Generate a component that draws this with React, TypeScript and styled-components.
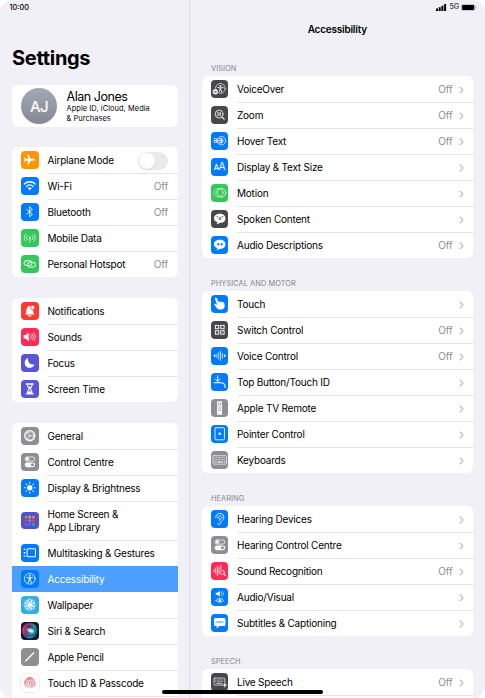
import React from 'react';
import styled, { createGlobalStyle, css } from 'styled-components';

const palette = {
  background: '#f1f0f6',
  line: '#e4e4e8',
  gray: '#8e8e93',
  dark: '#48484a',
  blue: '#007aff',
  green: '#34c759',
  orange: '#ff9500',
  red: '#ff3b30',
  pink: '#ff2d55',
  indigo: '#5856d6',
  cyan: '#32ade6',
};

type IconName = keyof typeof glyphs;

interface Item {
  label: string;
  icon: IconName;
  color: string;
  value?: string;
  toggle?: boolean;
  active?: boolean;
  tall?: boolean;
}

const glyphs = {
  airplane: (
    <path
      fill="#fff"
      stroke="none"
      d="M42 26c0 2-3 3-6 3h-7l-7 12h-4l4-12h-7l-3 4H9l2-7-2-7h3l3 4h7l-4-12h4l7 12h7c3 0 6 1 6 3z"
    />
  ),
  wifi: (
    <>
      <path strokeWidth="4" d="M10 21c9-9 23-9 32 0M16 28c6-5.500 14-5.500 20 0" />
      <path fill="#fff" stroke="none" d="M20 33c4-3 8-3 12 0l-6 7z" />
    </>
  ),
  bluetooth: <path strokeWidth="2.600" d="M17 19l17 14-8 8V11l8 8-17 14" />,
  cellular: (
    <>
      <path d="M14 15c-6 6-6 15 0 21M19 19c-4 4-4 9 0 13M38 15c6 6 6 15 0 21M33 19c4 4 4 9 0 13M26 27v12" />
      <circle cx="26" cy="25" r="3" fill="#fff" stroke="none" />
    </>
  ),
  hotspot: (
    <>
      <rect x="9" y="17" width="24" height="14" rx="7" strokeWidth="2.800" />
      <rect x="19" y="22" width="24" height="14" rx="7" strokeWidth="2.800" />
    </>
  ),
  bell: (
    <>
      <path fill="#fff" stroke="none" d="M11 37c4-4 5-6 5-12 0-8 4-13 10-14 6 1 10 6 10 14 0 6 1 8 5 12zM20 39h12c-1 5-11 5-12 0z" />
      <circle cx="35" cy="16" r="6.500" fill="#fff" stroke={palette.red} strokeWidth="2.500" />
    </>
  ),
  speaker: (
    <>
      <path fill="#fff" stroke="none" d="M8 21h6l9-8v26l-9-8H8z" />
      <path d="M28 20c3 4 3 8 0 12M33 17c5 6 5 12 0 18M38 14c6 8 6 16 0 24" />
    </>
  ),
  moon: <path fill="#fff" stroke="none" d="M21 11c-2 13 6 22 19 20-3 7-8 10-14 10-8 0-15-6-15-15 0-7 4-12 10-15z" />,
  hourglass: (
    <>
      <path strokeWidth="4" d="M16 12h20M16 41h20" />
      <path strokeWidth="3" d="M19 13c0 8 4 10 6 13-2 3-6 5-6 14h14c0-9-4-11-6-14 2-3 6-5 6-13" />
      <path fill="#fff" stroke="none" d="M21 19h10l-5 7zM20 40c0-4 4-6 6-7 2 1 6 3 6 7z" />
    </>
  ),
  gear: (
    <>
      <circle cx="26" cy="26" r="15" strokeWidth="3.500" strokeDasharray="2.400 .8" />
      <circle cx="26" cy="26" r="11.500" strokeWidth="2" />
      <circle cx="26" cy="26" r="3" />
      <path strokeWidth="2" d="M29 26h9M24 23l-5-8M24 29l-5 8" />
    </>
  ),
  controls: (
    <>
      <rect x="12" y="12" width="29" height="12" rx="6" />
      <circle cx="19" cy="18" r="4" fill="#fff" />
      <rect x="11" y="28" width="31" height="14" rx="7" fill="#fff" stroke="none" />
      <circle cx="34" cy="35" r="4.500" fill={palette.gray} stroke="none" />
    </>
  ),
  sun: (
    <>
      <circle cx="26" cy="26" r="8" fill="#fff" stroke="none" />
      <path strokeWidth="3" d="M26 10v3M26 39v3M10 26h3M39 26h3M15 15l2 2M35 35l2 2M15 37l2-2M35 17l2-2" />
    </>
  ),
  homeScreen: (
    <g stroke="none">
      <rect x="11" y="11" width="8" height="8" rx="2" fill="#4cb776" />
      <rect x="22" y="11" width="8" height="8" rx="2" fill="#f0a34a" />
      <rect x="33" y="11" width="8" height="8" rx="2" fill="#e98a55" />
      <rect x="11" y="22" width="8" height="8" rx="2" fill="#cf4476" />
      <rect x="22" y="22" width="8" height="8" rx="2" fill="#a978cc" />
      <rect x="33" y="22" width="8" height="8" rx="2" fill="#d54472" />
      <rect x="11" y="33" width="8" height="8" rx="2" fill="#8754e0" />
      <rect x="22" y="33" width="8" height="8" rx="2" fill="#3376f2" />
      <rect x="33" y="33" width="8" height="8" rx="2" fill="#30a6a5" />
    </g>
  ),
  multitask: (
    <>
      <rect x="18" y="14" width="25" height="24" rx="3" strokeWidth="3" />
      <path strokeWidth="4" strokeLinecap="butt" d="M8 16h5M8 26h5M8 36h5" />
    </>
  ),
  accessibility: (
    <>
      <circle cx="26" cy="26" r="16" strokeWidth="2.400" />
      <circle cx="26" cy="17" r="2.700" fill="#fff" stroke="none" />
      <path strokeWidth="2.800" d="M17 22l7 1.500h4l7-1.500M24.500 24v6l-3.500 8M27.500 24v6l3.500 8" />
    </>
  ),
  flower: (
    <g strokeWidth="2.200">
      {[0, 45, 90, 135, 180, 225, 270, 315].map((angle) => (
        <ellipse key={angle} cx="26" cy="16" rx="6" ry="7" transform={`rotate(${angle} 26 26)`} />
      ))}
      <circle cx="26" cy="26" r="3.500" fill="#fff" />
    </g>
  ),
  siri: (
    <g stroke="none">
      <defs>
        <linearGradient id="siriRing" x1="0" y1="0.300" x2="1" y2="0.700">
          <stop offset="0" stopColor="#e0356c" />
          <stop offset="0.350" stopColor="#7a3a78" />
          <stop offset="0.650" stopColor="#279c9f" />
          <stop offset="1" stopColor="#16406f" />
        </linearGradient>
        <radialGradient id="siriGlow">
          <stop offset="0" stopColor="#fff" />
          <stop offset="0.450" stopColor="#a5e6f2" stopOpacity="0.900" />
          <stop offset="1" stopColor="#3a8fc8" stopOpacity="0" />
        </radialGradient>
      </defs>
      <circle cx="26" cy="26" r="23" fill="url(#siriRing)" />
      <path fill="#1d2a44" opacity="0.600" d="M12 15c9-8 23-6 28 4-10-4-20-4-28-4z" />
      <ellipse cx="29" cy="26" rx="16" ry="9" fill="url(#siriGlow)" transform="rotate(20 29 26)" />
      <path fill="#2c3f9c" opacity="0.700" d="M12 34c7 3 15 7 26 4-7 8-20 7-26-4z" />
    </g>
  ),
  pencil: (
    <>
      <path strokeWidth="4" d="M15 37l23-23" />
      <path strokeWidth="2" d="M12 40l4-4" />
    </>
  ),
  fingerprint: (
    <g stroke="#f0606f" strokeWidth="2.600">
      <path d="M14 16c7-8 18-8 24 0M10 26c1-13 18-17 27-8 5 5 5 12 4 18M11 32c4-5 2-11 7-14 8-6 19 0 18 11 0 4-1 8-3 11M14 37c7-7 2-14 9-16 6-2 10 4 9 9-1 6-3 9-6 12M19 40c7-6 6-10 7-16" />
    </g>
  ),
  voiceOver: (
    <>
      <circle cx="28" cy="25" r="14.500" strokeWidth="2" />
      <circle cx="28" cy="17.500" r="2.500" fill="#fff" stroke="none" />
      <path strokeWidth="2.600" d="M20 22l6 1.300h4l6-1.300M27 24v5l-3 7M29 24v5l3 7" />
      <circle cx="13" cy="35" r="9" fill="#fff" stroke={palette.dark} strokeWidth="2" />
      <path stroke={palette.dark} strokeWidth="2" d="M9 35h6M13 33l2 2-2 2" />
    </>
  ),
  zoom: (
    <>
      <circle cx="24" cy="24" r="11.500" strokeWidth="2.400" />
      <path strokeWidth="3.500" d="M33 33l6 6" />
      <circle cx="24" cy="24" r="4" strokeWidth="2" />
      <path strokeWidth="1.800" d="M17 17l4 4M31 17l-4 4M17 31l4-4M31 31l-4-4" />
    </>
  ),
  hoverText: (
    <>
      <text x="7" y="33" fontSize="22" fill="#fff" stroke="none">a</text>
      <circle cx="31" cy="26" r="12.500" strokeWidth="2.200" />
      <path strokeWidth="2.800" d="M21 26h10M24 20h7c6 0 6 12 0 12h-7M31 20v12" />
    </>
  ),
  textSize: (
    <g fill="#fff" stroke="none">
      <text x="8" y="36" fontSize="22" fontWeight="500">A</text>
      <text x="22.500" y="36" fontSize="30">A</text>
    </g>
  ),
  motion: (
    <>
      <circle cx="31" cy="26" r="13" strokeWidth="2.200" />
      <circle cx="25.500" cy="26" r="12" strokeWidth="1.500" opacity="0.700" />
      <circle cx="20" cy="26" r="13" strokeWidth="1.500" strokeDasharray="1.500 2.500" opacity="0.700" />
    </>
  ),
  spoken: (
    <>
      <path fill="#fff" stroke="none" d="M26 11c10 0 17 6 17 14s-7 13-15 13c-3 0-7 4-12 4 3-2 3-4 3-6-6-2-10-6-10-11 0-8 7-14 17-14z" />
      <text x="26" y="30" fontSize="14" fontWeight="600" textAnchor="middle" fill={palette.dark} stroke="none">“a”</text>
    </>
  ),
  description: (
    <>
      <path fill="#fff" stroke="none" d="M26 11c10 0 17 6 17 14s-7 13-15 13c-3 0-7 4-12 4 3-2 3-4 3-6-6-2-10-6-10-11 0-8 7-14 17-14z" />
      <g fill={palette.blue} stroke={palette.blue} strokeWidth="2">
        <circle cx="21" cy="24" r="2" />
        <circle cx="31" cy="24" r="2" />
        <path d="M23 24c0 3-1 4-2 5M33 24c0 3-1 4-2 5" />
      </g>
    </>
  ),
  touch: (
    <path
      fill="#fff"
      stroke="none"
      d="M12 12c-1-4 4-5 5.500-2l5 11c1-2 5-2 6 0 2-2 5-1 6 1 2-1 5 0 5 3 3 10 0 17-9 18-7 1-11-1-14-5l-6-8c-2-3 2-5 4-3l4 3z"
    />
  ),
  switchControl: (
    <g strokeWidth="2.800" strokeLinejoin="miter">
      <rect x="13" y="13" width="10" height="10" />
      <rect x="29" y="13" width="10" height="10" />
      <rect x="13" y="29" width="10" height="10" />
      <rect x="29" y="29" width="10" height="10" />
    </g>
  ),
  voiceControl: (
    <>
      <path d="M17.500 21v10M23 16v20M28.500 12v28M34 19v14" />
      <path fill="#fff" stroke="none" d="M13 21v10l-6-5zM38.500 21v10l6-5z" />
    </>
  ),
  topButton: (
    <>
      <path d="M20 8v16M13 18l7 7 7-7" strokeWidth="2.800" />
      <path d="M9 29h20c8 0 13 5 13 14" strokeWidth="3.200" />
    </>
  ),
  remote: (
    <>
      <rect x="18" y="7" width="15" height="40" rx="2" fill="#fff" stroke="none" />
      <g stroke={palette.gray} strokeWidth="2">
        <circle cx="25.500" cy="15" r="4" />
        <path d="M22 24h2M27 24h2M22 29h2M27 29h2M22 34h2M27 34h2" />
      </g>
    </>
  ),
  pointer: (
    <>
      <rect x="12" y="8" width="28" height="36" rx="3" strokeWidth="2.600" />
      <circle cx="26" cy="26" r="4" fill="#fff" stroke="none" />
    </>
  ),
  keyboard: (
    <>
      <rect x="6" y="14" width="40" height="25" rx="2" strokeWidth="2" />
      <path strokeWidth="3" strokeDasharray="2 2.500" strokeLinecap="butt" d="M11 20h31M11 26h31" />
      <path strokeWidth="3" strokeLinecap="butt" d="M10 33h4M17 33h18M38 33h4" />
    </>
  ),
  ear: (
    <>
      <path strokeWidth="2.600" d="M14 23c0-7 5-13 12-13 8 0 13 6 12 14-1 7-7 8-9 14-2 7-9 6-9 2" />
      <path strokeWidth="2.200" d="M20 23c0-9 13-9 12 0-1 5-7 5-7 11M20 23c4-3 8 1 5 5" />
    </>
  ),
  soundRecognition: (
    <>
      <path strokeWidth="2.200" d="M9 23v6M14 18v16M19 12v29M24 17v19M29 10v12" />
      <circle cx="34" cy="31" r="6" />
      <path strokeWidth="3" d="M39 36l4 5" />
    </>
  ),
  audioVisual: (
    <>
      <path fill="#fff" stroke="none" d="M14 14h5l7-6v18l-7-6h-5z" />
      <path strokeWidth="1.800" d="M30 13c2 2 2 6 0 8M34 10c4 4 4 10 0 14" />
      <path strokeWidth="2.600" d="M15 37c6-8 16-8 22 0-6 7-16 7-22 0z" />
      <circle cx="26" cy="37" r="3.500" fill="#fff" stroke="none" />
    </>
  ),
  subtitles: (
    <>
      <path fill="#fff" stroke="none" d="M14 12h24c3 0 5 2 5 5v14c0 3-2 5-5 5H25l-8 7v-7h-3c-3 0-5-2-5-5V17c0-3 2-5 5-5z" />
      <path stroke={palette.blue} strokeWidth="2" d="M15 26l3-4 3 4 3-4 3 4 3-4 3 4 4-4" />
    </>
  ),
  liveSpeech: (
    <>
      <rect x="9" y="15" width="32" height="21" rx="2" strokeWidth="2" />
      <path strokeWidth="3" strokeDasharray="2 2" strokeLinecap="butt" d="M13 21h24M13 26h24" />
      <path strokeWidth="2" d="M17 31h15" />
      <circle cx="41" cy="36" r="6" fill={palette.dark} stroke="none" />
      <path strokeWidth="3" d="M36 36h10M41 31v10" />
    </>
  ),
};

const sidebarGroups: Item[][] = [
  [
    { label: 'Airplane Mode', icon: 'airplane', color: palette.orange, toggle: true },
    { label: 'Wi-Fi', icon: 'wifi', color: palette.blue, value: 'Off' },
    { label: 'Bluetooth', icon: 'bluetooth', color: palette.blue, value: 'Off' },
    { label: 'Mobile Data', icon: 'cellular', color: palette.green },
    { label: 'Personal Hotspot', icon: 'hotspot', color: palette.green, value: 'Off' },
  ],
  [
    { label: 'Notifications', icon: 'bell', color: palette.red },
    { label: 'Sounds', icon: 'speaker', color: palette.pink },
    { label: 'Focus', icon: 'moon', color: palette.indigo },
    { label: 'Screen Time', icon: 'hourglass', color: palette.indigo },
  ],
  [
    { label: 'General', icon: 'gear', color: palette.gray },
    { label: 'Control Centre', icon: 'controls', color: palette.gray },
    { label: 'Display & Brightness', icon: 'sun', color: palette.blue },
    { label: 'Home Screen &\nApp Library', icon: 'homeScreen', color: '#5551c8', tall: true },
    { label: 'Multitasking & Gestures', icon: 'multitask', color: palette.blue },
    { label: 'Accessibility', icon: 'accessibility', color: palette.blue, active: true },
    { label: 'Wallpaper', icon: 'flower', color: palette.cyan },
    { label: 'Siri & Search', icon: 'siri', color: '#15172b' },
    { label: 'Apple Pencil', icon: 'pencil', color: palette.gray },
    { label: 'Touch ID & Passcode', icon: 'fingerprint', color: '#fff' },
    { label: '', icon: 'fingerprint', color: '#fff' },
  ],
];

const sections: { title: string; items: Item[] }[] = [
  {
    title: 'VISION',
    items: [
      { label: 'VoiceOver', icon: 'voiceOver', color: palette.dark, value: 'Off' },
      { label: 'Zoom', icon: 'zoom', color: palette.dark, value: 'Off' },
      { label: 'Hover Text', icon: 'hoverText', color: palette.blue, value: 'Off' },
      { label: 'Display & Text Size', icon: 'textSize', color: palette.blue },
      { label: 'Motion', icon: 'motion', color: palette.green },
      { label: 'Spoken Content', icon: 'spoken', color: palette.dark },
      { label: 'Audio Descriptions', icon: 'description', color: palette.blue, value: 'Off' },
    ],
  },
  {
    title: 'PHYSICAL AND MOTOR',
    items: [
      { label: 'Touch', icon: 'touch', color: palette.blue },
      { label: 'Switch Control', icon: 'switchControl', color: palette.dark, value: 'Off' },
      { label: 'Voice Control', icon: 'voiceControl', color: palette.blue, value: 'Off' },
      { label: 'Top Button/Touch ID', icon: 'topButton', color: palette.blue },
      { label: 'Apple TV Remote', icon: 'remote', color: palette.gray },
      { label: 'Pointer Control', icon: 'pointer', color: palette.blue },
      { label: 'Keyboards', icon: 'keyboard', color: palette.gray },
    ],
  },
  {
    title: 'HEARING',
    items: [
      { label: 'Hearing Devices', icon: 'ear', color: palette.blue },
      { label: 'Hearing Control Centre', icon: 'controls', color: palette.gray },
      { label: 'Sound Recognition', icon: 'soundRecognition', color: palette.pink, value: 'Off' },
      { label: 'Audio/Visual', icon: 'audioVisual', color: palette.blue },
      { label: 'Subtitles & Captioning', icon: 'subtitles', color: palette.blue },
    ],
  },
  {
    title: 'SPEECH',
    items: [
      { label: 'Live Speech', icon: 'liveSpeech', color: palette.dark, value: 'Off' },
      { label: '', icon: 'liveSpeech', color: palette.dark },
    ],
  },
];

interface SettingRowProps {
  item: Item;
  chevron?: boolean;
}
const SettingRow: React.FC<SettingRowProps> = ({ item, chevron }) => (
  <Row $active={item.active} $tall={item.tall}>
    <IconTile $color={item.color}>
      <svg viewBox="0 0 52 52">{glyphs[item.icon]}</svg>
    </IconTile>
    <RowBody>
      <Label>{item.label}</Label>
      {item.value && <Value>{item.value}</Value>}
      {item.toggle && <Toggle />}
      {chevron && (
        <Chevron viewBox="0 0 5 8">
          <path d="M1 1l3 3-3 3" />
        </Chevron>
      )}
    </RowBody>
  </Row>
);

const App: React.FC = () => (
  <>
    <GlobalStyle />
    <Screen>
      <Sidebar>
        <Clock>10:00</Clock>
        <Title>Settings</Title>
        <ProfileCard>
          <Avatar>AJ</Avatar>
          <div>
            <ProfileName>Alan Jones</ProfileName>
            <ProfileText>
              Apple ID, iCloud, Media
              <br />& Purchases
            </ProfileText>
          </div>
        </ProfileCard>
        {sidebarGroups.map((items, i) => (
          <SidebarCard key={i}>
            {items.map((item) => (
              <SettingRow key={item.label} item={item} />
            ))}
          </SidebarCard>
        ))}
      </Sidebar>
      <Detail>
        <StatusBar>
          <svg width="11" height="7" viewBox="0 0 11 7">
            <path d="M0 4.600h2V7H0zM2.700 3.300h2V7h-2zM5.400 1.700h2V7h-2zM8.100 0h2v7h-2z" />
          </svg>
          <span>5G</span>
          <svg width="16" height="7" viewBox="0 0 16 7">
            <rect x="0.300" y="0.300" width="13.600" height="6.400" rx="1.800" fill="none" stroke="#9b9b9f" strokeWidth="0.600" />
            <rect x="1" y="1" width="12.200" height="5" rx="1.200" />
            <path d="M14.600 2.300c1 .3 1 2.100 0 2.400z" fill="#8e8e93" />
          </svg>
        </StatusBar>
        <Heading>Accessibility</Heading>
        {sections.map((section) => (
          <section key={section.title}>
            <SectionTitle>{section.title}</SectionTitle>
            <Card>
              {section.items.map((item) => (
                <SettingRow key={item.label} item={item} chevron />
              ))}
            </Card>
          </section>
        ))}
      </Detail>
      <HomeIndicator />
    </Screen>
  </>
);

export default App;

const GlobalStyle = createGlobalStyle`
  * {
    box-sizing: border-box;
  }
  body {
    margin: 0;
    background: #fff;
    font-family: Inter, 'Liberation Sans', sans-serif;
    color: #000;
  }
`;

const Screen = styled.div`
  position: relative;
  display: flex;
  width: 485px;
  height: 698px;
  overflow: hidden;
  background: ${palette.background};
  border-radius: 12px;
`;

const Sidebar = styled.aside`
  width: 190px;
  flex-shrink: 0;
  height: 698px;
  overflow: hidden;
  padding: 0 12px;
  border-right: 1px solid #dedde3;
`;

const Clock = styled.div`
  height: 43px;
  padding-top: 3px;
  margin-left: -2.5px;
  font-size: 7.3px;
  font-weight: 500;
  line-height: 10px;
`;

const Title = styled.h1`
  margin: 0 0 11px;
  height: 31px;
  font-size: 20px;
  font-weight: 700;
  line-height: 31px;
  letter-spacing: -0.3px;
`;

const Card = styled.div`
  overflow: hidden;
  background: #fff;
  border-radius: 6px;
`;

const SidebarCard = styled(Card)`
  width: 165.5px;
  margin-bottom: 21px;
`;

const ProfileCard = styled(SidebarCard)`
  display: flex;
  height: 42px;
  margin-bottom: 20px;
  padding: 0 9px;
  align-items: center;
  gap: 9.5px;
`;

const Avatar = styled.div`
  width: 36px;
  height: 36px;
  border-radius: 50%;
  background: linear-gradient(#a3a8b6, #858993);
  color: #fff;
  font-size: 15px;
  font-weight: 500;
  line-height: 37px;
  text-align: center;
  letter-spacing: -0.6px;
`;

const ProfileName = styled.div`
  padding-top: 1px;
  font-size: 12.5px;
  line-height: 14px;
  letter-spacing: -0.45px;
`;

const ProfileText = styled.div`
  font-size: 7.4px;
  line-height: 9.2px;
  letter-spacing: 0.08px;
  white-space: nowrap;
`;

const RowBody = styled.div`
  display: flex;
  flex: 1;
  align-self: stretch;
  align-items: center;
  padding-right: 9.5px;
  border-top: 1px solid ${palette.line};
`;

const Row = styled.div<{ $active?: boolean; $tall?: boolean }>`
  display: flex;
  align-items: center;
  gap: 9px;
  height: ${(props) => (props.$tall ? 39 : 26)}px;
  padding-left: 9px;

  &:first-child ${RowBody} {
    border-top-color: transparent;
  }

  ${(props) =>
    props.$active &&
    css`
      background: #4c9fff;
      color: #fff;

      ${RowBody}, & + div ${RowBody} {
        border-top-color: transparent;
      }
    `}
`;

const IconTile = styled.div<{ $color: string }>`
  width: 17.5px;
  height: 17.5px;
  flex-shrink: 0;
  border-radius: 4px;
  overflow: hidden;
  background: ${(props) => props.$color};
  box-shadow: ${(props) => (props.$color === '#fff' ? '0 0 0 0.5px #dcdce0' : 'none')};

  svg {
    display: block;
    width: 100%;
    height: 100%;
    fill: none;
    stroke: #fff;
    stroke-width: 2.2;
    stroke-linecap: round;
    stroke-linejoin: round;
  }
`;

const Label = styled.span`
  flex: 1;
  font-size: 10px;
  line-height: 13px;
  letter-spacing: -0.21px;
  white-space: pre;
`;

const Value = styled.span`
  color: ${palette.gray};
  font-size: 10px;
  line-height: 13px;
  letter-spacing: -0.1px;
`;

const Toggle = styled.span`
  width: 30px;
  height: 18px;
  padding: 1px;
  border-radius: 9px;
  background: #e9e9eb;

  &::before {
    content: '';
    display: block;
    width: 16px;
    height: 16px;
    border-radius: 50%;
    background: #fff;
    box-shadow: 0 1px 2px rgba(0, 0, 0, 0.12);
  }
`;

const Chevron = styled.svg`
  width: 5px;
  height: 8px;
  margin-left: 6px;
  fill: none;
  stroke: #bdbdc1;
  stroke-width: 1.1;
  stroke-linecap: round;
  stroke-linejoin: round;
`;

const Detail = styled.main`
  flex: 1;
  height: 698px;
  overflow: hidden;
  padding: 0 12px 0 11.5px;
`;

const StatusBar = styled.div`
  display: flex;
  height: 14px;
  align-items: center;
  justify-content: flex-end;
  gap: 2px;
  margin-right: -4px;
  font-size: 7.2px;
  line-height: 14px;
  font-weight: 500;
  letter-spacing: -0.1px;
  color: #333;

  svg {
    fill: #000;
  }
`;

const Heading = styled.h2`
  margin: 0;
  height: 29px;
  font-size: 10px;
  font-weight: 600;
  line-height: 30px;
  text-align: center;
  letter-spacing: -0.22px;
`;

const SectionTitle = styled.h3`
  margin: 0;
  height: 33px;
  padding: 21px 0 0 9.5px;
  color: #85858b;
  font-size: 7.4px;
  font-weight: 400;
  line-height: 9px;
  letter-spacing: 0.06px;
`;

const HomeIndicator = styled.div`
  position: absolute;
  left: 162px;
  bottom: 4px;
  width: 161px;
  height: 4px;
  border-radius: 2px;
  background: #000;
`;
